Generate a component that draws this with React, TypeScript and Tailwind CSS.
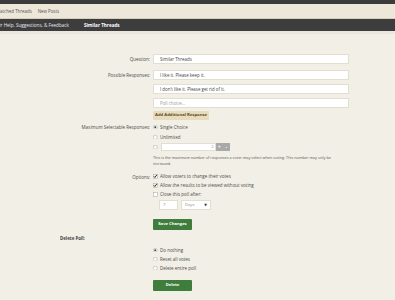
import React from "react";

function Radio({ checked }: { checked?: boolean }) {
  return (
    <svg viewBox="0 0 10 10" className="h-[4.5px] w-[4.5px] shrink-0">
      <circle cx="5" cy="5" r="4.4" fill="#fff" stroke="#9a9a9a" strokeWidth="1" />
      {checked && <circle cx="5" cy="5" r="2.2" fill="#444" />}
    </svg>
  );
}

function Check({ checked }: { checked?: boolean }) {
  return (
    <svg viewBox="0 0 10 10" className="h-[4.5px] w-[4.5px] shrink-0 overflow-visible">
      <rect x="0.5" y="0.5" width="9" height="9" fill="#fff" stroke="#9a9a9a" strokeWidth="1" />
      {checked && <path d="M1.8 5.2 L4.2 7.8 L8.6 1.8" stroke="#222" strokeWidth="2.2" fill="none" />}
    </svg>
  );
}

function Row({ label, children, className = "" }: { label?: string; children: React.ReactNode; className?: string }) {
  return (
    <div className={`flex ${className}`}>
      <div className="w-[153px] shrink-0 pr-[3px] text-right text-[4.5px] leading-[10px] text-[#4a4a4a]">{label}</div>
      <div className="flex flex-1 flex-col">{children}</div>
    </div>
  );
}

function TextBox({ text, placeholder }: { text?: string; placeholder?: boolean }) {
  return (
    <div className="flex h-[10px] w-[196px] items-center border-[0.5px] border-[#e2ded2] bg-white pl-[6px]">
      <span className={`text-[4.4px] leading-none ${placeholder ? "text-[#999]" : "text-[#444]"}`}>{text}</span>
    </div>
  );
}

function Opt({ children, h = "h-[10px]" }: { children: React.ReactNode; h?: string }) {
  return <div className={`flex ${h} items-center gap-[2.5px] text-[4.5px] leading-none text-[#4a4a4a]`}>{children}</div>;
}

export default function App() {
  return (
    <div className="h-[300px] w-[395px] overflow-hidden bg-[#f2f0e6] leading-none" style={{ fontFamily: '"Open Sans", "DejaVu Sans", sans-serif' }}>
      <div className="h-[4px] bg-[#3b3b3b]" />
      <div className="flex h-[15px] items-center gap-[6px] border-b-[0.5px] border-[#d6cfbd] bg-[#ede7d9] text-[4.4px] text-[#555]">
        <span className="-ml-[4px]">Watched Threads</span>
        <span>New Posts</span>
      </div>
      <div className="flex h-[12px] items-center gap-[15px] bg-[#3d3d3d] text-[4.6px] text-[#e8e8e8]">
        <span className="-ml-[3px]">Or Help, Suggestions, &amp; Feedback</span>
        <span className="font-bold text-white">Similar Threads</span>
      </div>
      <div className="h-[3px] bg-[#e9e7e0]" />

      <div className="pt-[20px]">
        <Row label="Question:">
          <TextBox text="Similar Threads" />
        </Row>
        <Row label="Possible Responses:" className="mt-[6px]">
          <TextBox text="I like it. Please keep it." />
          <div className="mt-[4px] flex"><TextBox text="I don't like it. Please get rid of it." /></div>
          <div className="mt-[4px] flex"><TextBox text="Poll choice..." placeholder /></div>
          <div className="mt-[3px] flex">
            <span className="flex h-[9px] items-center rounded-[1px] bg-[#e8dcbc] px-[2px] text-[4.2px] font-bold text-[#5a4a2a]">Add Additional Response</span>
          </div>
        </Row>

        <Row label="Maximum Selectable Responses:" className="mt-[2px]">
          <Opt><Radio checked /><span>Single Choice</span></Opt>
          <Opt><Radio /><span>Unlimited</span></Opt>
          <div className="flex h-[10px] items-center gap-[2px]">
            <Radio />
            <div className="ml-[1px] flex h-[8px] w-[55px] items-center justify-end border-[0.5px] border-[#e2ded2] bg-white pr-[1px] text-[4px] text-[#888]">2</div>
            <div className="-ml-[2px] flex h-[8px] w-[14px] items-center justify-around bg-[#a9a9a9] text-[4.5px] font-bold text-white"><span>+</span><span>-</span></div>
          </div>
          <div className="mt-[3px] w-[185px] text-[3.8px] leading-[5.5px] text-[#555]">
            This is the maximum number of responses a voter may select when voting. This number may only be increased.
          </div>
        </Row>

        <Row label="Options:" className="mt-[6px]">
          <Opt h="h-[9px]"><Check checked /><span>Allow voters to change their votes</span></Opt>
          <Opt h="h-[9px]"><Check checked /><span>Allow the results to be viewed without voting</span></Opt>
          <Opt h="h-[9px]"><Check /><span>Close this poll after:</span></Opt>
          <div className="ml-[6px] mt-[0.5px] flex h-[11px] items-center gap-[3px]">
            <div className="flex h-[10px] w-[19px] items-center border-[0.5px] border-[#e2ded2] bg-white pl-[3px] text-[4.2px] text-[#888]">7</div>
            <div className="flex h-[10px] w-[30px] items-center justify-between border-[0.5px] border-[#e2ded2] bg-white px-[3px] text-[4.2px] text-[#888]">
              <span>Days</span>
              <span className="text-[3.5px] text-[#333]">▼</span>
            </div>
          </div>
          <div className="mt-[8px] flex">
            <span className="flex h-[11px] w-[39px] items-center justify-center rounded-[1px] bg-[#3f7d3c] text-[4.2px] font-bold text-white">Save Changes</span>
          </div>
        </Row>

        <div className="mt-[5px] pl-[60px] text-[4.4px] font-bold leading-[6px] text-[#444]">Delete Poll:</div>
        <Row className="mt-[5px]">
          <Opt h="h-[9px]"><Radio checked /><span>Do nothing</span></Opt>
          <Opt h="h-[9px]"><Radio /><span>Reset all votes</span></Opt>
          <Opt h="h-[9px]"><Radio /><span>Delete entire poll</span></Opt>
          <div className="mt-[7px] flex">
            <span className="flex h-[11px] w-[39px] items-center justify-center rounded-[1px] bg-[#3f7d3c] text-[4.2px] font-bold text-white">Delete</span>
          </div>
        </Row>
      </div>
    </div>
  );
}
